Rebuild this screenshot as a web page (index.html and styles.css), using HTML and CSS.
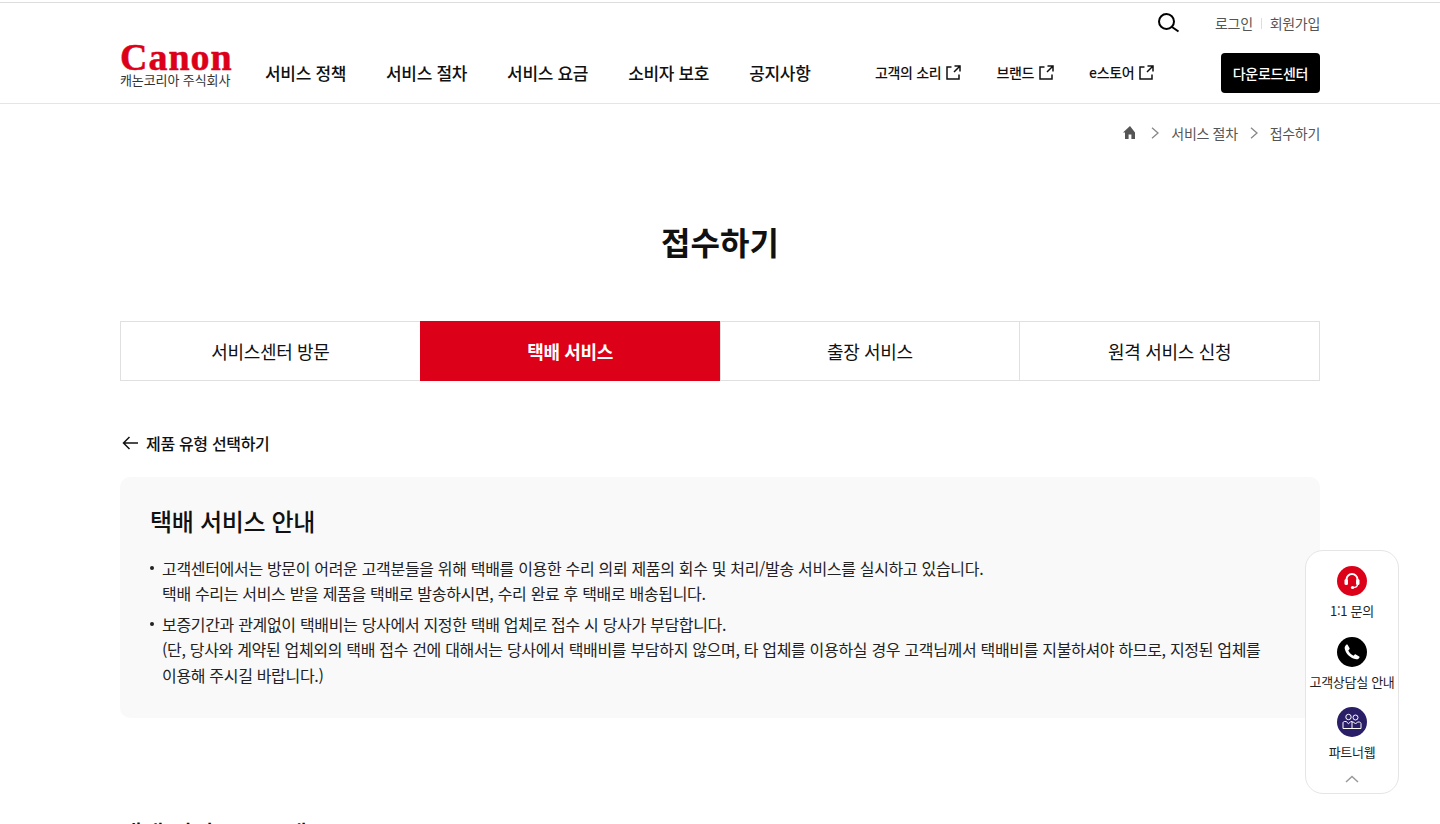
FILE: index.html
```html
<!DOCTYPE html>
<html lang="ko">
<head>
    <meta charset="UTF-8">
    <meta name="viewport" content="width=device-width, initial-scale=1.0">
    <title>접수하기</title>
    <link rel="stylesheet" href="styles.css">
</head>
<body>

    <!-- Header -->
    <header class="header">
        <div class="util-bar">
            <svg class="search-icon" width="22" height="22" viewBox="0 0 22 22" fill="none" stroke="#000" stroke-width="2"><circle cx="8.500" cy="9.500" r="7.500"/><path d="M14 15l6.500 4.500"/></svg>
            <a class="util-link">로그인</a>
            <span class="util-sep"></span>
            <a class="util-link">회원가입</a>
        </div>
        <div class="nav-bar">
            <a class="logo">
                <span class="logo-mark">Canon</span>
                <span class="logo-sub">캐논코리아 주식회사</span>
            </a>
            <nav class="main-nav">
                <a>서비스 정책</a>
                <a>서비스 절차</a>
                <a>서비스 요금</a>
                <a>소비자 보호</a>
                <a>공지사항</a>
            </nav>
            <nav class="sub-nav">
                <a>고객의 소리 <svg width="15" height="15" viewBox="0 0 15 15" fill="none" stroke="#111" stroke-width="1.500"><path d="M5.500 2H1v12h12V9.500"/><path d="M8.500 1H14v5.500M14 1L8 7"/></svg></a>
                <a>브랜드 <svg width="15" height="15" viewBox="0 0 15 15" fill="none" stroke="#111" stroke-width="1.500"><path d="M5.500 2H1v12h12V9.500"/><path d="M8.500 1H14v5.500M14 1L8 7"/></svg></a>
                <a>e스토어 <svg width="15" height="15" viewBox="0 0 15 15" fill="none" stroke="#111" stroke-width="1.500"><path d="M5.500 2H1v12h12V9.500"/><path d="M8.500 1H14v5.500M14 1L8 7"/></svg></a>
            </nav>
            <a class="download-btn">다운로드센터</a>
        </div>
    </header>

    <!-- Breadcrumb -->
    <div class="breadcrumb">
        <svg class="crumb-home" width="14" height="13" viewBox="0 0 14 13" fill="#555"><path d="M7 0L0 6.500h2V13h3.600V8.600h2.800V13H12V6.500z"/></svg>
        <svg width="8" height="12" viewBox="0 0 8 12" fill="none" stroke="#888" stroke-width="1.300"><path d="M1 .8l6 5.200-6 5.200"/></svg>
        <span>서비스 절차</span>
        <svg width="8" height="12" viewBox="0 0 8 12" fill="none" stroke="#888" stroke-width="1.300"><path d="M1 .8l6 5.200-6 5.200"/></svg>
        <span>접수하기</span>
    </div>

    <!-- Main Content -->
    <main class="content">
        <h1 class="page-title">접수하기</h1>

        <div class="tabs">
            <a class="tab">서비스센터 방문</a>
            <a class="tab active">택배 서비스</a>
            <a class="tab">출장 서비스</a>
            <a class="tab">원격 서비스 신청</a>
        </div>

        <a class="back-link">
            <svg width="16" height="14" viewBox="0 0 16 14" fill="none" stroke="#111" stroke-width="1.500"><path d="M16 7H1.500M7.500 1l-6 6 6 6"/></svg>
            제품 유형 선택하기
        </a>

        <section class="notice">
            <h2>택배 서비스 안내</h2>
            <ul>
                <li>고객센터에서는 방문이 어려운 고객분들을 위해 택배를 이용한 수리 의뢰 제품의 회수 및 처리/발송 서비스를 실시하고 있습니다.<br>택배 수리는 서비스 받을 제품을 택배로 발송하시면, 수리 완료 후 택배로 배송됩니다.</li>
                <li>보증기간과 관계없이 택배비는 당사에서 지정한 택배 업체로 접수 시 당사가 부담합니다.<br>(단, 당사와 계약된 업체외의 택배 접수 건에 대해서는 당사에서 택배비를 부담하지 않으며, 타 업체를 이용하실 경우 고객님께서 택배비를 지불하셔야 하므로, 지정된 업체를 이용해 주시길 바랍니다.)</li>
            </ul>
        </section>

        <h2 class="next-title">택배 서비스 프로세스</h2>
    </main>

    <!-- Floating menu -->
    <aside class="quick-menu">
        <a class="quick-item">
            <span class="quick-icon red">
                <svg width="18" height="18" viewBox="0 0 18 18" fill="none" stroke="#fff" stroke-width="2"><path d="M3.500 9V7.500a5.500 5.500 0 0 1 11 0V9"/><path d="M14.500 12.500c0 2-1.500 3-4.500 3" stroke-width="1.300"/><rect x="1.500" y="7" width="3.500" height="6" rx="1.500" fill="#fff" stroke="none"/><rect x="13" y="7" width="3.500" height="6" rx="1.500" fill="#fff" stroke="none"/><circle cx="9.500" cy="15.500" r="1.600" fill="#fff" stroke="none"/></svg>
            </span>
            1:1 문의
        </a>
        <a class="quick-item">
            <span class="quick-icon black">
                <svg width="16" height="16" viewBox="0 0 16 16" fill="#fff"><path d="M3.600.800l2 3.400c.2.400.1.800-.2 1.100L4.300 6.400c.8 2 2.900 4.300 5.300 5.300l1.100-1.100c.3-.3.800-.4 1.100-.2l3.400 2c.4.200.5.700.3 1.100-.8 1.400-2 2-3.300 1.800C6.500 14.500 1.500 9.500.7 4.500.5 3.200 1.100 1.900 2.500.600c.4-.2.900-.2 1.100.2z"/></svg>
            </span>
            고객상담실 안내
        </a>
        <a class="quick-item">
            <span class="quick-icon navy">
                <svg width="20" height="18" viewBox="0 0 20 18" fill="none" stroke="#fff" stroke-width="1"><circle cx="6.500" cy="4" r="2.700"/><circle cx="13.500" cy="4.500" r="2.500"/><path d="M1 15.500V10c0-1 .8-1.500 1.500-1.500h1.700l2.300 2.300 2.300-2.300H10v7zM10 9h1.500l2 2 2-2H17c1 0 2 .6 2 1.600v4.900h-9"/></svg>
            </span>
            파트너웹
        </a>
        <svg class="quick-top" width="14" height="8" viewBox="0 0 14 8" fill="none" stroke="#999" stroke-width="1.500"><path d="M1 7l6-5.500L13 7"/></svg>
    </aside>

</body>
</html>
```

FILE: styles.css
```css
html, body {
    height: 824px;
    overflow: hidden;
}
body {
    font-family: "Noto Sans CJK KR", "Noto Sans", sans-serif;
    margin: 0;
    padding: 0;
    color: #111;
    background: white;
    position: relative;
    letter-spacing: -0.02em;
}
a {
    color: inherit;
    text-decoration: none;
}

/* Header */
.header {
    height: 100px;
    border-top: 1px solid #ddd;
    border-bottom: 1px solid #e5e5e5;
    margin-top: 2px;
    padding: 0 120px;
}
.util-bar {
    display: flex;
    justify-content: flex-end;
    align-items: center;
    height: 40px;
    font-size: 14px;
    color: #555;
}
.search-icon {
    margin-right: 35px;
}
.util-sep {
    width: 1px;
    height: 11px;
    background: #ddd;
    margin: 0 8px;
}
.nav-bar {
    display: flex;
    align-items: center;
    height: 40px;
    margin-top: 10px;
}
.logo {
    display: flex;
    flex-direction: column;
    align-self: flex-start;
    width: 145px;
    margin-top: -7px;
}
.logo-mark {
    font-family: "Liberation Serif", serif;
    font-weight: bold;
    font-size: 38px;
    line-height: 23px;
    height: 26px;
    color: #dc0019;
    letter-spacing: 1px;
    -webkit-text-stroke: 0.5px #dc0019;
}
.logo-sub {
    font-size: 13px;
    line-height: 16px;
    color: #333;
    letter-spacing: -0.1px;
    white-space: nowrap;
}
.main-nav {
    display: flex;
    gap: 40px;
    font-size: 17px;
    font-weight: 500;
    width: 610px;
    padding-bottom: 2px;
}
.sub-nav {
    display: flex;
    gap: 35px;
    font-size: 14px;
    font-weight: 500;
    width: 346px;
    padding-bottom: 2px;
}
.sub-nav a {
    display: flex;
    align-items: center;
    gap: 5px;
}
.download-btn {
    width: 99px;
    height: 40px;
    background: black;
    color: white;
    border-radius: 4px;
    font-size: 14px;
    font-weight: 500;
    display: flex;
    align-items: center;
    justify-content: center;
}

/* Breadcrumb */
.breadcrumb {
    display: flex;
    justify-content: flex-end;
    align-items: center;
    gap: 12px;
    padding: 0 120px;
    height: 57px;
    font-size: 14px;
    color: #555;
}
.crumb-home {
    margin-right: 2px;
}

/* Main Content */
.content {
    padding: 0 120px;
}
.page-title {
    margin: 55px 0 0;
    text-align: center;
    font-size: 32px;
    font-weight: 700;
    line-height: 50px;
    letter-spacing: 0;
}
.tabs {
    display: flex;
    margin-top: 55px;
}
.tab {
    flex: 1;
    height: 58px;
    border: 1px solid #e0e0e0;
    margin-left: -1px;
    display: flex;
    align-items: center;
    justify-content: center;
    font-size: 18px;
    font-weight: 400;
    color: #111;
}
.tab:first-child {
    margin-left: 0;
}
.tab.active {
    background: #dc0019;
    border-color: #dc0019;
    color: white;
    font-weight: 700;
}
.back-link {
    display: flex;
    align-items: center;
    gap: 8px;
    margin-top: 50px;
    height: 24px;
    padding-left: 2px;
    font-size: 16px;
    font-weight: 500;
}
.notice {
    margin-top: 22px;
    background: #f9f9f9;
    border-radius: 10px;
    padding: 24px 30px 30px;
}
.notice h2 {
    margin: 0 0 14.5px;
    font-size: 24px;
    font-weight: 500;
    line-height: 40px;
}
.notice ul {
    list-style: none;
    margin: 0;
    padding: 0;
}
.notice li {
    position: relative;
    padding-left: 12px;
    margin-bottom: 5px;
    font-size: 16px;
    line-height: 25.6px;
    color: #222;
    word-break: keep-all;
}
.notice li:last-child {
    margin-bottom: 0;
}
.notice li::before {
    content: "";
    position: absolute;
    left: 0;
    top: 10px;
    width: 4px;
    height: 4px;
    border-radius: 50%;
    background: #222;
}
.next-title {
    margin: 95px 0 0;
    font-size: 24px;
    font-weight: 500;
    line-height: 40px;
}

/* Floating menu */
.quick-menu {
    position: absolute;
    left: 1305px;
    top: 550px;
    width: 94px;
    height: 244px;
    box-sizing: border-box;
    border: 1px solid #e5e5e5;
    border-radius: 18px;
    background: white;
    padding-top: 15px;
    display: flex;
    flex-direction: column;
    align-items: center;
    gap: 15.5px;
}
.quick-item {
    display: flex;
    flex-direction: column;
    align-items: center;
    gap: 5px;
    font-size: 13px;
    line-height: 20px;
    letter-spacing: -0.3px;
    white-space: nowrap;
    color: #222;
}
.quick-icon {
    width: 30px;
    height: 30px;
    border-radius: 50%;
    display: flex;
    align-items: center;
    justify-content: center;
}
.quick-icon.red { background: #dc0019; }
.quick-icon.black { background: black; }
.quick-icon.navy { background: #2a1e66; }
.quick-top {
    margin-top: -3px;
}
```
